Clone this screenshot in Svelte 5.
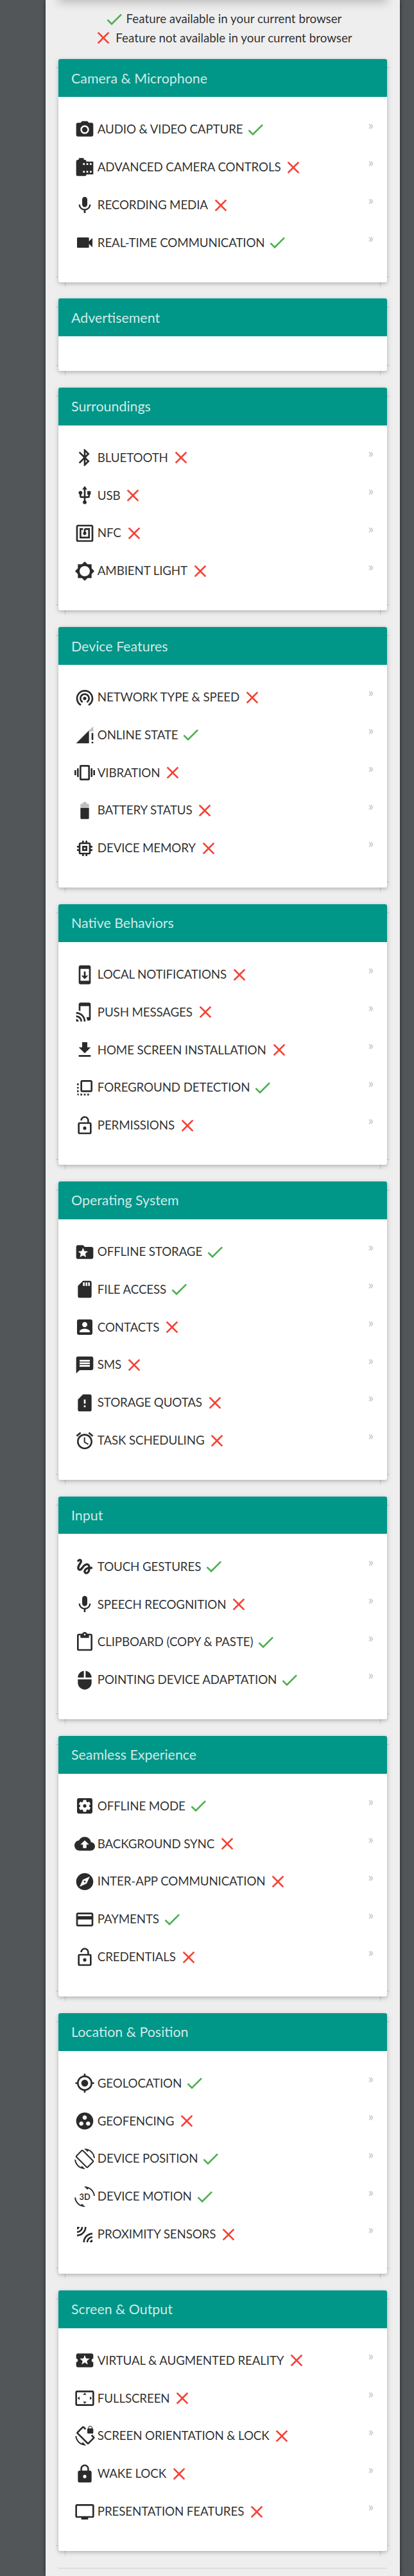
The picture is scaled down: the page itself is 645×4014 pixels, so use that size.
<script>
  const paths = {
    camera: 'M12 8.8a3.2 3.2 0 1 0 0 6.4 3.2 3.2 0 0 0 0-6.4zM9 2L7.17 4H4c-1.1 0-2 .9-2 2v12c0 1.1.9 2 2 2h16c1.1 0 2-.9 2-2V6c0-1.1-.9-2-2-2h-3.17L15 2H9zm3 15c-2.76 0-5-2.24-5-5s2.24-5 5-5 5 2.24 5 5-2.24 5-5 5z',
    cameraRoll: 'M14 5c0-1.1-.9-2-2-2h-1V2c0-.55-.45-1-1-1H6c-.55 0-1 .45-1 1v1H4c-1.1 0-2 .9-2 2v15c0 1.1.9 2 2 2h8c1.1 0 2-.9 2-2h8V5h-8zm-2 13h-2v-2h2v2zm0-9h-2V7h2v2zm4 9h-2v-2h2v2zm0-9h-2V7h2v2zm4 9h-2v-2h2v2zm0-9h-2V7h2v2z',
    mic: 'M12 14c1.66 0 2.99-1.34 2.99-3L15 5c0-1.66-1.34-3-3-3S9 3.34 9 5v6c0 1.66 1.34 3 3 3zm5.3-3c0 3-2.54 5.1-5.3 5.1S6.7 14 6.7 11H5c0 3.41 2.72 6.23 6 6.72V21h2v-3.28c3.28-.48 6-3.3 6-6.72h-1.7z',
    videocam: 'M17 10.5V7c0-.55-.45-1-1-1H4c-.55 0-1 .45-1 1v10c0 .55.45 1 1 1h12c.55 0 1-.45 1-1v-3.5l4 4v-11l-4 4z',
    bluetooth: 'M17.71 7.71L12 2h-1v7.59L6.41 5 5 6.41 10.59 12 5 17.59 6.41 19 11 14.41V22h1l5.71-5.71-4.3-4.29 4.3-4.29zM13 5.83l1.88 1.88L13 9.59V5.83zm1.88 10.46L13 18.17v-3.76l1.88 1.88z',
    usb: 'M15 7v4h1v2h-3V5h2l-3-4-3 4h2v8H8v-2.07c.7-.37 1.2-1.08 1.2-1.93 0-1.21-.99-2.2-2.2-2.2-1.21 0-2.2.99-2.2 2.2 0 .85.5 1.56 1.2 1.93V13c0 1.11.89 2 2 2h3v3.05c-.71.37-1.2 1.1-1.2 1.95 0 1.22.99 2.2 2.2 2.2 1.21 0 2.2-.98 2.2-2.2 0-.85-.49-1.58-1.2-1.95V15h3c1.11 0 2-.89 2-2v-2h1V7h-4z',
    nfc: 'M20 2H4c-1.1 0-2 .9-2 2v16c0 1.1.9 2 2 2h16c1.1 0 2-.9 2-2V4c0-1.1-.9-2-2-2zm0 18H4V4h16v16zM18 6h-5c-1.1 0-2 .9-2 2v2.28c-.6.35-1 .98-1 1.72 0 1.1.9 2 2 2s2-.9 2-2c0-.74-.4-1.38-1-1.72V8h3v8H8V8h2V6H6v12h12V6z',
    brightness: 'M20 15.31L23.31 12 20 8.69V4h-4.69L12 .69 8.69 4H4v4.69L.69 12 4 15.31V20h4.69L12 23.31 15.31 20H20v-4.69zM12 18c-3.31 0-6-2.69-6-6s2.69-6 6-6 6 2.69 6 6-2.69 6-6 6z',
    tethering: 'M12 11c-1.1 0-2 .9-2 2s.9 2 2 2 2-.9 2-2-.9-2-2-2zm6 2c0-3.31-2.69-6-6-6s-6 2.69-6 6c0 2.22 1.21 4.15 3 5.19l1-1.74c-1.19-.7-2-1.97-2-3.45 0-2.21 1.79-4 4-4s4 1.79 4 4c0 1.48-.81 2.75-2 3.45l1 1.74c1.79-1.04 3-2.97 3-5.19zM12 3C6.48 3 2 7.48 2 13c0 3.7 2.01 6.92 4.99 8.65l1-1.73C5.61 18.53 4 15.96 4 13c0-4.42 3.58-8 8-8s8 3.58 8 8c0 2.96-1.61 5.53-4 6.92l1 1.73c2.99-1.73 5-4.95 5-8.65 0-5.52-4.48-10-10-10z',
    signal: 'M17 22V7L2 22h15zm3-12v8h2v-8h-2zm0 12h2v-2h-2v2z',
    vibration: 'M0 15h2V9H0v6zm3 2h2V7H3v10zm19-8v6h2V9h-2zm-3 8h2V7h-2v10zM16.5 3h-9C6.67 3 6 3.67 6 4.5v15c0 .83.67 1.5 1.5 1.5h9c.83 0 1.5-.67 1.5-1.5v-15c0-.83-.67-1.5-1.5-1.5zM16 19H8V5h8v14z',
    battery: 'M7 9v11.67C7 21.4 7.6 22 8.33 22h7.33c.74 0 1.34-.6 1.34-1.33V9H7z',
    memory: 'M15 9H9v6h6V9zm-2 4h-2v-2h2v2zm8-2V9h-2V7c0-1.1-.9-2-2-2h-2V3h-2v2h-2V3H9v2H7c-1.1 0-2 .9-2 2v2H3v2h2v2H3v2h2v2c0 1.1.9 2 2 2h2v2h2v-2h2v2h2v-2h2c1.1 0 2-.9 2-2v-2h2v-2h-2v-2h2zm-4 6H7V7h10v10z',
    update: 'M17 1.01L7 1c-1.1 0-2 .9-2 2v18c0 1.1.9 2 2 2h10c1.1 0 2-.9 2-2V3c0-1.1-.9-1.99-2-1.99zM17 19H7V5h10v14zm-1-6h-3V8h-2v5H8l4 4 4-4z',
    tapPlay: 'M2 16v2c2.76 0 5 2.24 5 5h2c0-3.87-3.13-7-7-7zm0 4v3h3c0-1.66-1.34-3-3-3zm0-8v2c4.97 0 9 4.03 9 9h2c0-6.08-4.92-11-11-11zM17 1.01L7 1c-1.1 0-2 .9-2 2v7.37c.69.16 1.36.37 2 .64V5h10v13h-3.03c.52 1.25.84 2.59.95 4H17c1.1 0 2-.9 2-2V3c0-1.1-.9-1.99-2-1.99z',
    download: 'M19 9h-4V3H9v6H5l7 7 7-7zM5 18v2h14v-2H5z',
    flip: 'M3 13h2v-2H3v2zm0 4h2v-2H3v2zm2 4v-2H3c0 1.1.89 2 2 2zM3 9h2V7H3v2zm12 12h2v-2h-2v2zm4-18H9c-1.11 0-2 .9-2 2v10c0 1.1.89 2 2 2h10c1.1 0 2-.9 2-2V5c0-1.1-.9-2-2-2zm0 12H9V5h10v10zm-8 6h2v-2h-2v2zm-4 0h2v-2H7v2z',
    lockOpen: 'M12 17c1.1 0 2-.9 2-2s-.9-2-2-2-2 .9-2 2 .9 2 2 2zm6-9h-1V6c0-2.76-2.24-5-5-5S7 3.24 7 6h1.9c0-1.71 1.39-3.1 3.1-3.1 1.71 0 3.1 1.39 3.1 3.1v2H6c-1.1 0-2 .9-2 2v10c0 1.1.9 2 2 2h12c1.1 0 2-.9 2-2V10c0-1.1-.9-2-2-2zm0 12H6V10h12v10z',
    folder: 'M20 6h-8l-2-2H4c-1.1 0-1.99.9-1.99 2L2 18c0 1.1.9 2 2 2h16c1.1 0 2-.9 2-2V8c0-1.1-.9-2-2-2zm-6.42 12L10 15.9 6.42 18l.95-4.07-3.16-2.74 4.16-.36L10 7l1.63 3.84 4.16.36-3.16 2.74.95 4.06z',
    sdCard: 'M18 2h-8L4.02 8 4 20c0 1.1.9 2 2 2h12c1.1 0 2-.9 2-2V4c0-1.1-.9-2-2-2zm-6 6h-2V4h2v4zm3 0h-2V4h2v4zm3 0h-2V4h2v4z',
    account: 'M3 5v14c0 1.1.89 2 2 2h14c1.1 0 2-.9 2-2V5c0-1.1-.9-2-2-2H5c-1.11 0-2 .9-2 2zm12 4c0 1.66-1.34 3-3 3s-3-1.34-3-3 1.34-3 3-3 3 1.34 3 3zm-9 8c0-2 4-3.1 6-3.1s6 1.1 6 3.1v1H6v-1z',
    message: 'M20 2H4c-1.1 0-1.99.9-1.99 2L2 22l4-4h14c1.1 0 2-.9 2-2V4c0-1.1-.9-2-2-2zm-2 12H6v-2h12v2zm0-3H6V9h12v2zm0-3H6V6h12v2z',
    simAlert: 'M18 2h-8L4.02 8 4 20c0 1.1.9 2 2 2h12c1.1 0 2-.9 2-2V4c0-1.1-.9-2-2-2zm-5 15h-2v-2h2v2zm0-4h-2V8h2v5z',
    alarm: 'M22 5.72l-4.6-3.86-1.29 1.53 4.6 3.86L22 5.72zM7.88 3.39L6.6 1.86 2 5.71l1.29 1.53 4.59-3.85zM12.5 8H11v6l4.75 2.85.75-1.23-4-2.37V8zM12 4c-4.97 0-9 4.03-9 9s4.02 9 9 9c4.97 0 9-4.03 9-9s-4.03-9-9-9zm0 16c-3.87 0-7-3.13-7-7s3.13-7 7-7 7 3.13 7 7-3.13 7-7 7z',
    gesture: 'M4.59 6.89c.7-.71 1.4-1.35 1.71-1.22.5.2 0 1.03-.3 1.52-.25.42-2.86 3.89-2.86 6.31 0 1.28.48 2.34 1.34 2.98.75.56 1.74.73 2.64.46 1.07-.31 1.95-1.4 3.06-2.77 1.21-1.49 2.83-3.44 4.08-3.44 1.63 0 1.65 1.01 1.76 1.79-3.78.64-5.38 3.67-5.38 5.37 0 1.7 1.44 3.09 3.21 3.09 1.63 0 4.29-1.33 4.69-6.1H21v-2.5h-2.47c-.15-1.65-1.09-4.2-4.03-4.2-2.25 0-4.18 1.91-4.94 2.84-.58.73-2.06 2.48-2.29 2.72-.25.3-.68.84-1.11.84-.45 0-.72-.83-.36-1.92.35-1.09 1.4-2.86 1.85-3.52.78-1.14 1.3-1.92 1.3-3.28C8.95 3.69 7.31 3 6.44 3 5.12 3 3.97 4 3.72 4.25c-.36.36-.66.66-.88.93l1.75 1.71zm9.29 11.66c-.31 0-.74-.26-.74-.72 0-.6.73-2.2 2.87-2.76-.3 2.69-1.43 3.48-2.13 3.48z',
    clipboard: 'M19 2h-4.18C14.4.84 13.3 0 12 0c-1.3 0-2.4.84-2.82 2H5c-1.1 0-2 .9-2 2v16c0 1.1.9 2 2 2h14c1.1 0 2-.9 2-2V4c0-1.1-.9-2-2-2zm-7 0c.55 0 1 .45 1 1s-.45 1-1 1-1-.45-1-1 .45-1 1-1zm7 18H5V4h2v3h10V4h2v16z',
    mouse: 'M13 1.07V9h7c0-4.08-3.05-7.44-7-7.93zM4 15c0 4.42 3.58 8 8 8s8-3.58 8-8v-4H4v4zm7-13.93C7.05 1.56 4 4.92 4 9h7V1.07z',
    settings: 'M12 10c-1.1 0-2 .9-2 2s.9 2 2 2 2-.9 2-2-.9-2-2-2zm7-7H5c-1.11 0-2 .9-2 2v14c0 1.1.89 2 2 2h14c1.11 0 2-.9 2-2V5c0-1.1-.89-2-2-2zm-1.75 9c0 .23-.02.46-.05.68l1.48 1.16c.13.11.17.3.08.45l-1.4 2.42c-.09.15-.27.21-.43.15l-1.74-.7c-.36.28-.76.51-1.18.69l-.26 1.85c-.03.17-.18.3-.35.3h-2.8c-.17 0-.32-.13-.35-.29l-.26-1.85c-.43-.18-.82-.41-1.18-.69l-1.74.7c-.16.06-.34 0-.43-.15l-1.4-2.42c-.09-.15-.05-.34.08-.45l1.48-1.16c-.03-.23-.05-.46-.05-.69 0-.23.02-.46.05-.68l-1.48-1.16c-.13-.11-.17-.3-.08-.45l1.4-2.42c.09-.15.27-.21.43-.15l1.74.7c.36-.28.76-.51 1.18-.69l.26-1.85c.03-.17.18-.3.35-.3h2.8c.17 0 .32.13.35.29l.26 1.85c.43.18.82.41 1.18.69l1.74-.7c.16-.06.34 0 .43.15l1.4 2.42c.09.15.05.34-.08.45l-1.48 1.16c.03.23.05.46.05.69z',
    backup: 'M19.35 10.04C18.67 6.59 15.64 4 12 4 9.11 4 6.6 5.64 5.35 8.04 2.34 8.36 0 10.91 0 14c0 3.31 2.69 6 6 6h13c2.76 0 5-2.24 5-5 0-2.64-2.05-4.78-4.65-4.96zM14 13v4h-4v-4H7l5-5 5 5h-3z',
    explore: 'M12 10.9c-.61 0-1.1.49-1.1 1.1s.49 1.1 1.1 1.1c.61 0 1.1-.49 1.1-1.1s-.49-1.1-1.1-1.1zM12 2C6.48 2 2 6.48 2 12s4.48 10 10 10 10-4.48 10-10S17.52 2 12 2zm2.19 12.19L6 18l3.81-8.19L18 6l-3.81 8.19z',
    payment: 'M20 4H4c-1.11 0-1.99.89-1.99 2L2 18c0 1.11.89 2 2 2h16c1.11 0 2-.89 2-2V6c0-1.11-.89-2-2-2zm0 14H4v-6h16v6zm0-10H4V6h16v2z',
    gps: 'M12 8c-2.21 0-4 1.79-4 4s1.79 4 4 4 4-1.79 4-4-1.79-4-4-4zm8.94 3c-.46-4.17-3.77-7.48-7.94-7.94V1h-2v2.06C6.83 3.52 3.52 6.83 3.06 11H1v2h2.06c.46 4.17 3.77 7.48 7.94 7.94V23h2v-2.06c4.17-.46 7.48-3.77 7.94-7.94H23v-2h-2.06zM12 19c-3.87 0-7-3.13-7-7s3.13-7 7-7 7 3.13 7 7-3.13 7-7 7z',
    groupWork: 'M12 2C6.48 2 2 6.48 2 12s4.48 10 10 10 10-4.48 10-10S17.52 2 12 2zM8 17.5c-1.38 0-2.5-1.12-2.5-2.5s1.12-2.5 2.5-2.5 2.5 1.12 2.5 2.5-1.12 2.5-2.5 2.5zM9.5 8c0-1.38 1.12-2.5 2.5-2.5s2.5 1.12 2.5 2.5-1.12 2.5-2.5 2.5S9.5 9.38 9.5 8zm6.5 9.5c-1.38 0-2.5-1.12-2.5-2.5s1.12-2.5 2.5-2.5 2.5 1.12 2.5 2.5-1.12 2.5-2.5 2.5z',
    rotation: 'M16.48 2.52c3.27 1.55 5.61 4.72 5.97 8.48h1.5C23.44 4.84 18.29 0 12 0l-.66.03 3.81 3.81 1.33-1.32zm-6.25-.77c-.59-.59-1.54-.59-2.12 0L1.75 8.11c-.59.59-.59 1.54 0 2.12l12.02 12.02c.59.59 1.54.59 2.12 0l6.36-6.36c.59-.59.59-1.54 0-2.12L10.23 1.75zm4.6 19.44L2.81 9.17l6.36-6.36 12.02 12.02-6.36 6.36zm-7.31.29C4.25 19.94 1.91 16.76 1.55 13H.05C.56 19.16 5.71 24 12 24l.66-.03-3.81-3.81-1.33 1.32z',
    rotation3d: 'M7.52 21.48C4.25 19.94 1.91 16.76 1.55 13H.05C.56 19.16 5.71 24 12 24l.66-.03-3.81-3.81-1.33 1.32zM16.48 2.52c3.27 1.55 5.61 4.72 5.97 8.48h1.5C23.44 4.84 18.29 0 12 0l-.66.03 3.81 3.81 1.33-1.32z',
    leak: 'M6 3H3v3c1.66 0 3-1.34 3-3zm8 0h-2c0 4.97-4.03 9-9 9v2c6.08 0 11-4.93 11-11zm-4 0H8c0 2.76-2.24 5-5 5v2c3.87 0 7-3.13 7-7zm0 18h2c0-4.97 4.03-9 9-9v-2c-6.07 0-11 4.93-11 11zm8 0h3v-3c-1.66 0-3 1.34-3 3zm-4 0h2c0-2.76 2.24-5 5-5v-2c-3.87 0-7 3.13-7 7z',
    activity: 'M20 12c0-1.1.9-2 2-2V6c0-1.1-.9-2-2-2H4c-1.1 0-1.99.9-1.99 2v4c1.1 0 1.99.9 1.99 2s-.89 2-2 2v4c0 1.1.9 2 2 2h16c1.1 0 2-.9 2-2v-4c-1.1 0-2-.9-2-2zm-4.42 4.8L12 14.5l-3.58 2.3 1.08-4.12-3.29-2.69 4.24-.25L12 5.8l1.54 3.95 4.24.25-3.29 2.69 1.09 4.11z',
    overscan: 'M12.01 5.5L10 8h4l-1.99-2.5zM18 10v4l2.5-1.99L18 10zM6 10l-2.5 2.01L6 14v-4zm8 6h-4l2.01 2.5L14 16zm7-13H3c-1.1 0-2 .9-2 2v14c0 1.1.9 2 2 2h18c1.1 0 2-.9 2-2V5c0-1.1-.9-2-2-2zm0 16.01H3V4.99h18v14.02z',
    lockRotation: 'M23.25 12.77l-2.57-2.57-1.41 1.41 2.22 2.22-5.66 5.66L4.51 8.17l5.66-5.66 2.1 2.1 1.41-1.41L11.23.75c-.59-.59-1.54-.59-2.12 0L2.75 7.11c-.59.59-.59 1.54 0 2.12l12.02 12.02c.59.59 1.54.59 2.12 0l6.36-6.36c.59-.59.59-1.54 0-2.12zM8.47 20.48C5.2 18.94 2.86 15.76 2.5 12H1c.51 6.16 5.66 11 11.95 11l.66-.03-3.81-3.82-1.33 1.33zM16 9h5c.55 0 1-.45 1-1V4c0-.55-.45-1-1-1v-.5C21 1.12 19.88 0 18.5 0S16 1.12 16 2.5V3c-.55 0-1 .45-1 1v4c0 .55.45 1 1 1zm.8-6.5c0-.94.76-1.7 1.7-1.7s1.7.76 1.7 1.7V3h-3.4v-.5z',
    lock: 'M18 8h-1V6c0-2.76-2.24-5-5-5S7 3.24 7 6v2H6c-1.1 0-2 .9-2 2v10c0 1.1.9 2 2 2h12c1.1 0 2-.9 2-2V10c0-1.1-.9-2-2-2zm-6 9c-1.1 0-2-.9-2-2s.9-2 2-2 2 .9 2 2-.9 2-2 2zm3.1-9H8.9V6c0-1.71 1.39-3.1 3.1-3.1 1.71 0 3.1 1.39 3.1 3.1v2z',
    video: 'M21 3H3c-1.11 0-2 .89-2 2v12c0 1.1.89 2 2 2h5v2h8v-2h5c1.1 0 1.99-.9 1.99-2L23 5c0-1.11-.9-2-2-2zm0 14H3V5h18v12z',
    yes: 'M9 16.2L4.8 12l-1.4 1.4L9 19 21 7l-1.4-1.4L9 16.2z',
    no: 'M19 6.41L17.59 5 12 10.59 6.41 5 5 6.41 10.59 12 5 17.59 6.41 19 12 13.41 17.59 19 19 17.59 13.41 12z'
  };

  // Translucent parts of the two-tone status icons
  const faded = {
    signal: 'M22 8V2L17 7v1z',
    battery: 'M17 5.33C17 4.6 16.4 4 15.67 4H14V2h-4v2H8.33C7.6 4 7 4.6 7 5.33V9h10V5.33z'
  };

  const groups = [
    { title: 'Camera & Microphone', items: [
      ['camera', 'Audio & Video Capture', true],
      ['cameraRoll', 'Advanced Camera Controls', false],
      ['mic', 'Recording Media', false],
      ['videocam', 'Real-Time Communication', true]
    ] },
    { title: 'Advertisement', items: [] },
    { title: 'Surroundings', items: [
      ['bluetooth', 'Bluetooth', false],
      ['usb', 'USB', false],
      ['nfc', 'NFC', false],
      ['brightness', 'Ambient Light', false]
    ] },
    { title: 'Device Features', items: [
      ['tethering', 'Network Type & Speed', false],
      ['signal', 'Online State', true],
      ['vibration', 'Vibration', false],
      ['battery', 'Battery Status', false],
      ['memory', 'Device Memory', false]
    ] },
    { title: 'Native Behaviors', items: [
      ['update', 'Local Notifications', false],
      ['tapPlay', 'Push Messages', false],
      ['download', 'Home Screen Installation', false],
      ['flip', 'Foreground Detection', true],
      ['lockOpen', 'Permissions', false]
    ] },
    { title: 'Operating System', items: [
      ['folder', 'Offline Storage', true],
      ['sdCard', 'File Access', true],
      ['account', 'Contacts', false],
      ['message', 'SMS', false],
      ['simAlert', 'Storage Quotas', false],
      ['alarm', 'Task Scheduling', false]
    ] },
    { title: 'Input', items: [
      ['gesture', 'Touch Gestures', true],
      ['mic', 'Speech Recognition', false],
      ['clipboard', 'Clipboard (Copy & Paste)', true],
      ['mouse', 'Pointing Device Adaptation', true]
    ] },
    { title: 'Seamless Experience', items: [
      ['settings', 'Offline Mode', true],
      ['backup', 'Background Sync', false],
      ['explore', 'Inter-App Communication', false],
      ['payment', 'Payments', true],
      ['lockOpen', 'Credentials', false]
    ] },
    { title: 'Location & Position', items: [
      ['gps', 'Geolocation', true],
      ['groupWork', 'Geofencing', false],
      ['rotation', 'Device Position', true],
      ['rotation3d', 'Device Motion', true],
      ['leak', 'Proximity Sensors', false]
    ] },
    { title: 'Screen & Output', items: [
      ['activity', 'Virtual & Augmented Reality', false],
      ['overscan', 'Fullscreen', false],
      ['lockRotation', 'Screen Orientation & Lock', false],
      ['lock', 'Wake Lock', false],
      ['video', 'Presentation Features', false]
    ] }
  ];
</script>

{#snippet icon(name)}
  <svg class="icon {name}" viewBox="0 0 24 24" aria-hidden="true">
    {#if faded[name]}<path d={faded[name]} opacity="0.3" />{/if}
    <path d={paths[name]} />
    {#if name === 'rotation3d'}<text x="12.1" y="15.6" text-anchor="middle">3D</text>{/if}
  </svg>
{/snippet}

<main class="page">
  <div class="banner"></div>
  <div class="legend">
    <p>{@render icon('yes')}<span>Feature available in your current browser</span></p>
    <p>{@render icon('no')}<span>Feature not available in your current browser</span></p>
  </div>

  {#each groups as group}
    <section class="card">
      <h2>{group.title}</h2>
      {#if group.items.length}
        <ul>
          {#each group.items as [name, label, available]}
            <li>
              {@render icon(name)}
              <span class="label">{label.toUpperCase()}</span>
              {@render icon(available ? 'yes' : 'no')}
              <span class="more">»</span>
            </li>
          {/each}
        </ul>
      {:else}
        <div class="empty"></div>
      {/if}
    </section>
  {/each}
  <hr />
</main>

<style>
  :global(body) {
    background: #525659;
  }
  .page {
    display: flow-root;
    box-sizing: border-box;
    width: 552px;
    height: 4014px;
    margin-left: 71px;
    padding: 0 20px;
    isolation: isolate;
    background: #eee;
    box-shadow: 0 0 6px rgba(0, 0, 0, 0.6);
    color: rgba(0, 0, 0, 0.83);
    font: 18.8px/29.6px Lato, sans-serif;
  }
  .banner {
    height: 60px;
    margin-top: -60px;
    box-shadow: 0 4px 14px rgba(0, 0, 0, 0.22);
  }
  .legend {
    padding: 14.8px 0 18.3px;
  }
  .legend p {
    display: flex;
    align-items: center;
    justify-content: center;
    gap: 3px;
    height: 29.6px;
    margin: 0;
  }
  .legend span {
    padding-bottom: 1.6px;
  }
  .icon {
    flex: none;
    width: 32px;
    height: 32px;
    fill: currentColor;
  }
  .icon text {
    font: bold 9.6px Lato, sans-serif;
  }
  .yes {
    color: #4caf50;
  }
  .no {
    color: #f44336;
  }
  .card {
    position: relative;
    margin-bottom: 25.9px;
    border-radius: 3px;
    background: #fff;
    box-shadow: 0 2px 5px rgba(0, 0, 0, 0.16), 0 2px 10px rgba(0, 0, 0, 0.12);
  }
  /* faint seams where the shadow segments meet */
  .card::before {
    content: '';
    position: absolute;
    z-index: -1;
    inset: 0 -4px -8px;
    background:
      linear-gradient(#0002, #0002) 0 13px / 100% 1px no-repeat,
      linear-gradient(#0002, #0002) 0 calc(100% - 16px) / 100% 1px no-repeat,
      linear-gradient(#0003, #0001) 14px 100% / 1px 8px no-repeat,
      linear-gradient(#0003, #0001) calc(100% - 14px) 100% / 1px 8px no-repeat;
  }
  h2 {
    box-sizing: border-box;
    height: 58.8px;
    margin: 0;
    padding: 0.6px 20px 0;
    border-radius: 3px 3px 0 0;
    background: #009688;
    color: rgba(255, 255, 255, 0.83);
    font-size: 21.4px;
    font-weight: 400;
    line-height: 58.8px;
  }
  ul {
    margin: 0;
    padding: 21.5px 21px 31.8px 25px;
    list-style: none;
  }
  li {
    display: flex;
    align-items: center;
    height: 58.8px;
  }
  .label {
    padding: 0 3.9px 1.6px 3.8px;
    letter-spacing: -0.15px;
    white-space: nowrap;
  }
  .more {
    margin-left: auto;
    padding-bottom: 15px;
    color: #bec3c7;
    font-size: 20px;
  }
  .empty {
    height: 53.6px;
  }
  hr {
    height: 2px;
    margin: 0;
    border: 0;
    background: #ddd;
  }
</style>
